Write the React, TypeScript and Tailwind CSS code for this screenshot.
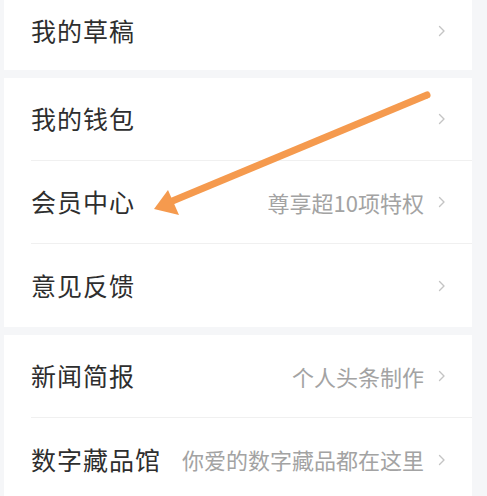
const font = { fontFamily: '"Noto Sans CJK SC", "Noto Sans", sans-serif' }

type Item = { title: string; sub?: string }

function Chevron() {
  return (
    <svg width="8" height="12" viewBox="0 0 8 12" fill="none" stroke="#c4c4c4" strokeWidth="1.4" className="shrink-0">
      <path d="M1.5 1.5L6 6L1.5 10.5" strokeLinecap="round" strokeLinejoin="round" />
    </svg>
  )
}

function Row({ item, last, tall = true }: { item: Item; last?: boolean; tall?: boolean }) {
  return (
    <div className={`flex items-center pr-[26px] ${tall ? "h-[83px]" : "h-[62px]"} ${last ? "" : "border-b border-[#f0f0f0]"}`}>
      <span className="text-[25px] text-[#2e2e2e] tracking-[1px] shrink-0">{item.title}</span>
      <span className="ml-auto text-[22px] text-[#a3a3a3] whitespace-nowrap overflow-hidden">{item.sub}</span>
      <span className="ml-[14px]">
        <Chevron />
      </span>
    </div>
  )
}

function Card({ items, first }: { items: Item[]; first?: boolean }) {
  return (
    <div className={`bg-white ml-[4px] mr-[15px] pl-[27px] ${first ? "pb-[8px]" : ""}`}>
      {items.map((it, i) => (
        <Row key={it.title} item={it} last={i === items.length - 1} tall={!first} />
      ))}
    </div>
  )
}

export default function App() {
  return (
    <div className="relative w-[487px] h-[496px] overflow-hidden bg-[#f5f6f8] flex flex-col gap-[8px]" style={font}>
      <Card first items={[{ title: "我的草稿" }]} />
      <Card
        items={[
          { title: "我的钱包" },
          { title: "会员中心", sub: "尊享超10项特权" },
          { title: "意见反馈" },
        ]}
      />
      <Card
        items={[
          { title: "新闻简报", sub: "个人头条制作" },
          { title: "数字藏品馆", sub: "你爱的数字藏品都在这里" },
        ]}
      />

      {/* annotation arrow */}
      <svg className="absolute left-0 top-0 pointer-events-none" width="487" height="496">
        <line x1="427" y1="95" x2="170" y2="202" stroke="#f59a4e" strokeWidth="7" strokeLinecap="round" />
        <polygon points="154,209 168,190 179,215" fill="#f59a4e" />
      </svg>
    </div>
  )
}
